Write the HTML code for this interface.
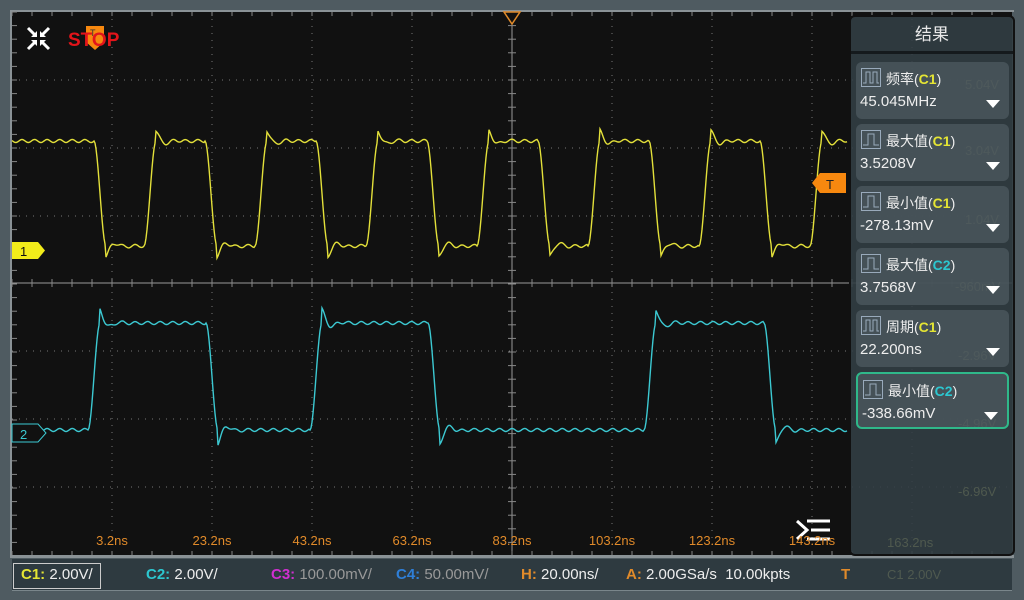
<!DOCTYPE html>
<html><head><meta charset="utf-8"><style>
*{margin:0;padding:0;box-sizing:border-box}
body{width:1024px;height:600px;background:#4f5b61;position:relative;overflow:hidden;font-family:"Liberation Sans","Noto Sans CJK SC",sans-serif}
.abs{position:absolute}
.lbl{position:absolute;top:533px;color:#e08a2a;font-size:13px;transform:translateX(-50%)}
.panel{position:absolute;left:849px;top:15px;width:166px;height:541px;background:rgba(50,62,68,0.9);border:2px solid #111;border-radius:6px}
.hdr{height:37px;border-bottom:3px solid #151a1d;color:#e8e8e8;font-size:17px;text-align:center;line-height:36px}
.item{position:absolute;left:5px;width:153px;height:57px;background:rgba(78,90,96,0.75);border-radius:6px;color:#eee;font-size:14px}
.item .t{position:absolute;left:30px;top:7px}
.item .v{position:absolute;left:4px;top:31px;font-size:15px}
.item svg{position:absolute;left:5px;top:6px}
.item .ar{position:absolute;right:9px;top:38px;width:0;height:0;border-left:7px solid transparent;border-right:7px solid transparent;border-top:8px solid #fff}
.y{color:#e5e534;font-weight:bold}.c{color:#2cc7d0;font-weight:bold}
.bar{position:absolute;left:12px;top:559px;width:1000px;height:32px;background:#2e3a40;border-bottom:1px solid #7a868b}
.bar span{position:absolute;top:7px;font-size:15px;color:#eee}
.sc{position:absolute;color:rgba(140,150,110,0.35);font-size:13px}
</style></head><body>
<svg class="abs" style="left:0;top:0" width="1024" height="600">
<rect x="12" y="10" width="1000" height="548" fill="#111"/>
<rect x="10" y="10" width="1004" height="2" fill="#8a9296"/>
<rect x="10" y="10" width="2" height="548" fill="#8a9296"/>
<rect x="10" y="555" width="1004" height="3" fill="#8a9296"/>
<g id="grid" stroke="#888" stroke-width="1"></g>
<path d="M504 12 L520 12 L512 24 Z" fill="#111" stroke="#e08a2a" stroke-width="1.5"/>
<path id="yel" fill="none" stroke="#e3e03a" stroke-width="1.4"/>
<path id="cya" fill="none" stroke="#3cc9d2" stroke-width="1.4"/>
<path d="M12 242 H38 L45 250.5 L38 259 H12 Z" fill="#f2ec1a"/>
<text x="20" y="256" font-size="13" fill="#111" font-family="Liberation Sans">1</text>
<path d="M12 424 H38 L46 433 L38 442 H12 Z" fill="#111" stroke="#3cc9d2" stroke-width="1"/>
<text x="20" y="439" font-size="13" fill="#3cc9d2" font-family="Liberation Sans">2</text>
<path d="M820 173 H846 V193 H820 L812 183 Z" fill="#f7880f"/>
<text x="826" y="189" font-size="13" fill="#222" font-family="Liberation Sans">T</text>
<g stroke="#fff" stroke-width="3" fill="#fff">
<path d="M28 28 L36 36 M49 28 L41 36 M28 49 L36 41 M49 49 L41 41" />
</g>
<g fill="#fff"><path d="M37 37 L37 31 L31 37Z M40 37 L40 31 L46 37Z M37 40 L37 46 L31 40Z M40 40 L40 46 L46 40Z"/></g>
<path d="M86 26 H104 V42 L95 50 L86 42 Z" fill="#f7880f"/>
<text x="90" y="36" font-size="9" fill="#333" font-family="Liberation Sans">T</text>
<text x="68" y="46" font-size="19" font-weight="bold" fill="#e3141a" font-family="Liberation Sans">STOP</text>
<g stroke="#fff" stroke-width="3" fill="none"><path d="M797 521 L807 530 L797 539"/><path d="M807 521 H830 M811 530 H830 M807 539 H830"/></g>
</svg>
<div class="lbl" style="left:112px">3.2ns</div>
<div class="lbl" style="left:212px">23.2ns</div>
<div class="lbl" style="left:312px">43.2ns</div>
<div class="lbl" style="left:412px">63.2ns</div>
<div class="lbl" style="left:512px">83.2ns</div>
<div class="lbl" style="left:612px">103.2ns</div>
<div class="lbl" style="left:712px">123.2ns</div>
<div class="lbl" style="left:812px">143.2ns</div>
<div class="bar">
<div class="abs" style="left:1px;top:4px;width:88px;height:26px;border:1px solid #ccc"></div>
<span style="left:9px"><b class="y">C1:</b> 2.00V/</span>
<span style="left:134px"><b class="c">C2:</b> 2.00V/</span>
<span style="left:259px;color:#999"><b style="color:#d02fd0">C3:</b> 100.00mV/</span>
<span style="left:384px;color:#999"><b style="color:#2e7fd8">C4:</b> 50.00mV/</span>
<span style="left:509px"><b style="color:#e08a2a">H:</b> 20.00ns/</span>
<span style="left:614px"><b style="color:#e08a2a">A:</b> 2.00GSa/s&nbsp; 10.00kpts</span>
<span style="left:829px"><b style="color:#e08a2a">T</b></span>
</div>
<div class="panel">
<div class="hdr">结果</div>
<div class="sc" style="left:114px;top:60px">5.04V</div>
<div class="sc" style="left:114px;top:126px">3.04V</div>
<div class="sc" style="left:114px;top:195px">1.04V</div>
<div class="sc" style="left:104px;top:262px">-960mV</div>
<div class="sc" style="left:107px;top:331px">-2.96V</div>
<div class="sc" style="left:107px;top:399px">-4.96V</div>
<div class="sc" style="left:107px;top:467px">-6.96V</div>
<div class="sc" style="left:36px;top:518px">163.2ns</div>
<div class="sc" style="left:36px;top:550px">C1 2.00V</div>
<div class="item" style="top:45px"><svg width="20" height="19"><rect x="0.5" y="0.5" width="19" height="18" fill="none" stroke="#9ab"/><path d="M2 15 H5 V4 H9 V15 H12 V4 H16 V15 H18" fill="none" stroke="#9ab"/></svg><div class="t">频率(<span class="y">C1</span>)</div><div class="v">45.045MHz</div><div class="ar"></div></div>
<div class="item" style="top:107px"><svg width="20" height="19"><rect x="0.5" y="0.5" width="19" height="18" fill="none" stroke="#9ab"/><path d="M2 15 H7 V4 H13 V15 H18" fill="none" stroke="#9ab"/></svg><div class="t">最大值(<span class="y">C1</span>)</div><div class="v">3.5208V</div><div class="ar"></div></div>
<div class="item" style="top:169px"><svg width="20" height="19"><rect x="0.5" y="0.5" width="19" height="18" fill="none" stroke="#9ab"/><path d="M2 15 H7 V4 H13 V15 H18" fill="none" stroke="#9ab"/></svg><div class="t">最小值(<span class="y">C1</span>)</div><div class="v">-278.13mV</div><div class="ar"></div></div>
<div class="item" style="top:231px"><svg width="20" height="19"><rect x="0.5" y="0.5" width="19" height="18" fill="none" stroke="#9ab"/><path d="M2 15 H7 V4 H13 V15 H18" fill="none" stroke="#9ab"/></svg><div class="t">最大值(<span class="c">C2</span>)</div><div class="v">3.7568V</div><div class="ar"></div></div>
<div class="item" style="top:293px"><svg width="20" height="19"><rect x="0.5" y="0.5" width="19" height="18" fill="none" stroke="#9ab"/><path d="M2 15 H5 V4 H9 V15 H12 V4 H16 V15 H18" fill="none" stroke="#9ab"/></svg><div class="t">周期(<span class="y">C1</span>)</div><div class="v">22.200ns</div><div class="ar"></div></div>
<div class="item" style="top:355px;border:2px solid #2fb88a"><svg width="20" height="19"><rect x="0.5" y="0.5" width="19" height="18" fill="none" stroke="#9ab"/><path d="M2 15 H7 V4 H13 V15 H18" fill="none" stroke="#9ab"/></svg><div class="t">最小值(<span class="c">C2</span>)</div><div class="v">-338.66mV</div><div class="ar"></div></div>
</div>
<script>
var g=document.getElementById('grid'),s='';
var hy=[80,148,216,351,419,487];
for(var k=1;k<10;k++){var x=12+100*k;if(k!=5)s+='<line x1="'+x+'" y1="12" x2="'+x+'" y2="555" stroke-dasharray="1 6" stroke="#777"/>';}
hy.forEach(function(y){s+='<line x1="12" y1="'+y+'" x2="1012" y2="'+y+'" stroke-dasharray="1 6" stroke="#777"/>';});
s+='<line x1="12" y1="283" x2="1012" y2="283" stroke="#999"/><line x1="512" y1="12" x2="512" y2="555" stroke="#999"/>';
for(var x=12;x<1012;x+=20){s+='<line x1="'+x+'" y1="12" x2="'+x+'" y2="16"/><line x1="'+x+'" y1="551" x2="'+x+'" y2="555"/><line x1="'+x+'" y1="279" x2="'+x+'" y2="287"/>';}
for(var y=12;y<555;y+=13.6){s+='<line x1="12" y1="'+y+'" x2="17" y2="'+y+'"/><line x1="508" y1="'+y+'" x2="516" y2="'+y+'"/>';}
g.innerHTML=s;
function trace(edges,hi,lo,amp,id){
 var d='';
 for(var x=12;x<=847;x+=1){
  var last=-1e9,up=false;
  edges.forEach(function(e){if(x>=e[0]-4){last=e[0];up=e[1];}});
  var t=x-last,y;
  var from=up?lo:hi,to=up?hi:lo;
  if(last<-1e8){to=edges[0][1]?lo:hi;from=to;t=99;}
  if(t<8){var f=(t+4)/12;f=f*f*(3-2*f);y=from+(to-from)*Math.min(1,f);}
  else{var r=t-8;y=to+(from-to)*(-amp)*Math.exp(-r/7)*Math.cos(r/3.5)+1.5*Math.sin(x*0.5);}
  d+=(d?'L':'M')+x+' '+y.toFixed(1);
 }
 document.getElementById(id).setAttribute('d',d);
}
var ye=[];for(var i=0;i<8;i++){ye.push([98+111*i,false]);ye.push([148+111*i,true]);}
ye.sort(function(a,b){return a[0]-b[0]});
trace(ye,141,246,0.1,'yel');
trace([[92,true],[210,false],[314,true],[432,false],[648,true],[768,false]],323,430,0.13,'cya');
</script>
</body></html>
